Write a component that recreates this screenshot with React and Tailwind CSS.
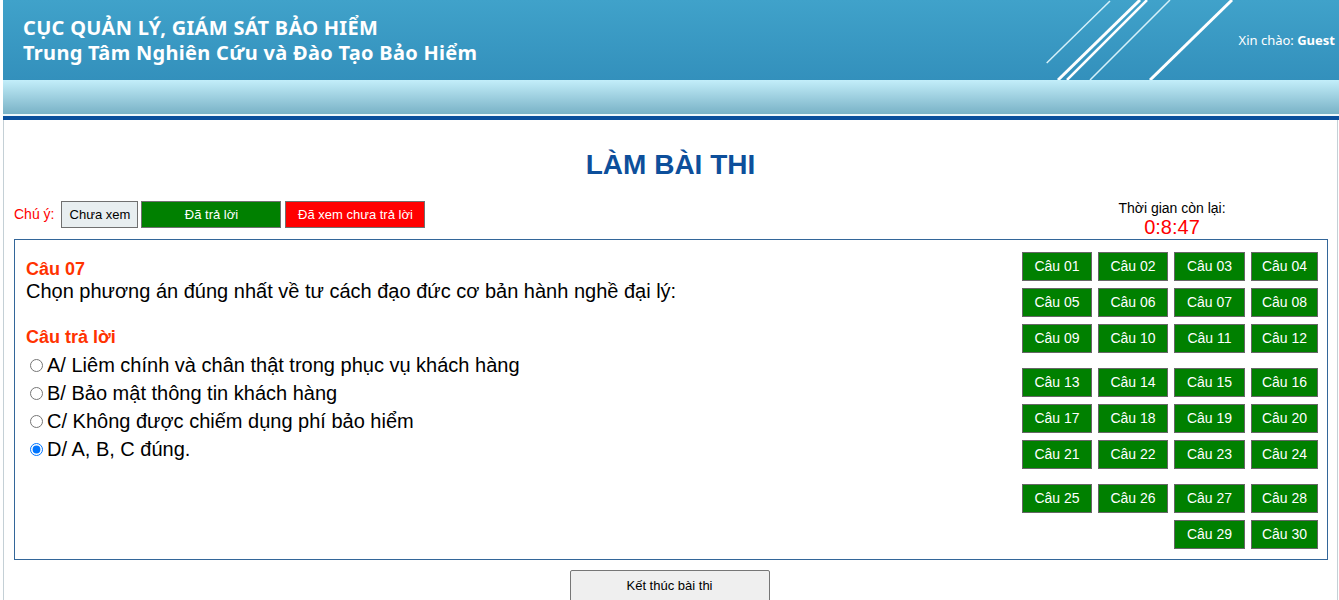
const legendBtn = "h-[27px] border border-[#707070] text-[13px] leading-none";

function QBtn({ n, className = "" }) {
  return (
    <div
      className={
        "flex h-[29px] items-center justify-center border border-[#666] bg-[#008000] text-[14px] text-white " +
        className
      }
    >
      Câu {String(n).padStart(2, "0")}
    </div>
  );
}

function Group({ from, to }) {
  const items = [];
  for (let i = from; i <= to; i++) items.push(i);
  return (
    <div className="grid grid-cols-[70px_70px_71px_67px] gap-x-[6px] gap-y-[7px]">
      {items.map((n) => (
        <QBtn key={n} n={n} />
      ))}
    </div>
  );
}

const options = [
  "A/ Liêm chính và chân thật trong phục vụ khách hàng",
  "B/ Bảo mật thông tin khách hàng",
  "C/ Không được chiếm dụng phí bảo hiểm",
  "D/ A, B, C đúng.",
];

export default function App() {
  return (
    <div className="min-h-[600px] bg-white pl-[3px] font-['Liberation_Sans',Arial,sans-serif]">
      {/* header */}
      <div className="relative h-[80px] bg-gradient-to-b from-[#40a2ca] to-[#3390bc]">
        <div className="pl-[20px] pt-[15px] font-['Noto_Sans',Tahoma,sans-serif] text-[20px] font-bold leading-[25px] tracking-[0.3px] text-white">
          <div>CỤC QUẢN LÝ, GIÁM SÁT BẢO HIỂM</div>
          <div>Trung Tâm Nghiên Cứu và Đào Tạo Bảo Hiểm</div>
        </div>
        <svg className="absolute left-[1037px] top-0" width="200" height="80" viewBox="0 0 200 80">
          <line x1="6.7" y1="63" x2="70" y2="1" stroke="#d5f1fa" strokeWidth="1.5" />
          <line x1="18" y1="80" x2="100" y2="0" stroke="#ffffff" strokeWidth="3" />
          <line x1="27" y1="80" x2="107" y2="0" stroke="#ffffff" strokeWidth="2.5" />
          <line x1="50" y1="80" x2="130" y2="0" stroke="#d5f1fa" strokeWidth="1.5" />
          <line x1="110" y1="80" x2="192" y2="0" stroke="#ffffff" strokeWidth="3" />
        </svg>
        <div className="absolute right-[4px] top-[31px] font-['Noto_Sans',Tahoma,sans-serif] text-[13px] text-white">
          Xin chào: <b>Guest</b>
        </div>
      </div>
      <div className="h-[34px] bg-gradient-to-b from-[#c3eefa] to-[#79b2c6]" />
      <div className="h-[2px] bg-[#eef8fb]" />
      <div className="h-[4px] bg-[#0a4f9c]" />

      {/* content */}
      <div className="mr-px border-x border-[#c4d0d6] pb-10">
        <h1 className="pt-[29px] text-center text-[28px] font-bold leading-[32px] text-[#0d4f9b]">LÀM BÀI THI</h1>

        <div className="mt-[19px] flex items-start justify-between">
          <div className="ml-[10px] mt-px flex items-center gap-[3px]">
            <span className="mr-[4px] text-[14px] text-[#ff0000]">Chú ý:</span>
            <div className={legendBtn + " flex w-[77px] items-center justify-center bg-[#e8eef0] text-black"}>Chưa xem</div>
            <div className={legendBtn + " flex w-[140px] items-center justify-center bg-[#008000] text-white"}>Đã trả lời</div>
            <div className={legendBtn + " ml-px flex w-[140px] items-center justify-center bg-[#ff0000] text-white"}>
              Đã xem chưa trả lời
            </div>
          </div>
          <div className="mr-[95px] w-[140px] text-center">
            <div className="text-[14px] leading-[16px] text-black">Thời gian còn lại:</div>
            <div className="text-[20px] leading-[23px] text-[#ff0000]">0:8:47</div>
          </div>
        </div>

        <div className="ml-[10px] mr-[9px] flex justify-between border border-[#336699] pb-[10px] pr-[9px] pt-[12px]">
          <div className="pl-[11px] pt-[7px]">
            <div className="text-[18px] font-bold leading-[20px] text-[#ff3300]">Câu 07</div>
            <div className="mt-[1px] text-[20px] leading-[22px] text-black">
              Chọn phương án đúng nhất về tư cách đạo đức cơ bản hành nghề đại lý:
            </div>
            <div className="mt-[25px] text-[18px] font-bold leading-[20px] text-[#ff3300]">Câu trả lời</div>
            <div className="mt-[4px]">
              {options.map((o, i) => (
                <label key={i} className="flex h-[28px] items-center text-[20px] text-black">
                  <input
                    type="radio"
                    name="ans"
                    defaultChecked={i === 3}
                    className="m-0 ml-[4px] mr-[4px] h-[13px] w-[13px]"
                  />
                  {o}
                </label>
              ))}
            </div>
          </div>
          <div className="flex flex-col gap-[15px]">
            <Group from={1} to={12} />
            <Group from={13} to={24} />
            <div className="grid grid-cols-[70px_70px_71px_67px] gap-x-[6px] gap-y-[7px]">
              <QBtn n={25} />
              <QBtn n={26} />
              <QBtn n={27} />
              <QBtn n={28} />
              <QBtn n={29} className="col-start-3" />
              <QBtn n={30} />
            </div>
          </div>
        </div>

        <div className="mt-[10px] flex justify-center">
          <button className="mr-[2px] h-[32px] w-[200px] rounded-[2px] border border-[#767676] bg-[#efefef] text-[13px] text-black">
            Kết thúc bài thi
          </button>
        </div>
      </div>
    </div>
  );
}
